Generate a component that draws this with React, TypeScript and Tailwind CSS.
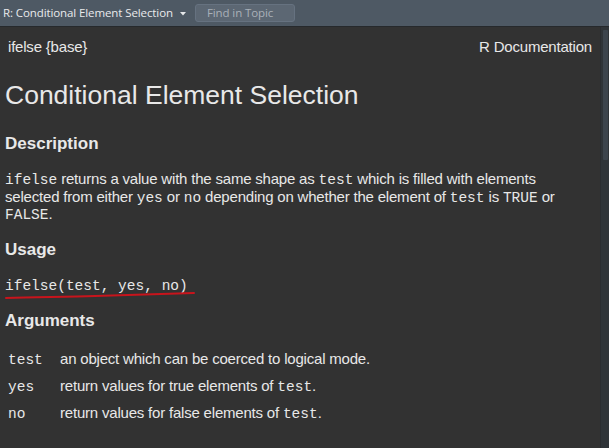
import React from "react";

const mono = "[font-family:'Liberation_Mono','Courier_New',monospace] text-[14.5px] tracking-normal leading-none";

export default function App() {
  return (
    <div className="w-[609px] h-[448px] overflow-hidden flex flex-col bg-[#323232] [font-family:'Liberation_Sans',Arial,sans-serif] text-[#e8e8e8]">
      <div className="h-[27px] shrink-0 flex items-center bg-[#4e5964] border-b border-[#26292c] [font-family:'Open_Sans','Noto_Sans',sans-serif] text-[11.5px] tracking-[-0.1px]">
        <span className="ml-[3px] text-[#e9eaec]">R: Conditional Element Selection</span>
        <svg width="6" height="4" viewBox="0 0 6 4" className="ml-[7px] mt-[1px]">
          <path d="M0 0 L6 0 L3 3.5 Z" fill="#e6e8ea" />
        </svg>
        <div className="ml-[9px] w-[100px] h-[18px] rounded-[3px] bg-[#5c6773] border border-[#667280] flex items-center pl-[11px] text-[#a9b0b8]">
          Find in Topic
        </div>
      </div>
      <div className="flex flex-1 min-h-0">
        <div className="flex-1 pl-[5px] pr-[8px] tracking-[-0.2px]">
          <div className="flex justify-between items-center h-[20px] mt-[10px] text-[15px]">
            <span className="ml-[3px]">ifelse {"{base}"}</span>
            <span>R Documentation</span>
          </div>
          <h1 className="text-[26.5px] leading-[30px] mt-[23px] tracking-normal">Conditional Element Selection</h1>
          <h2 className="text-[17px] font-bold leading-[20px] mt-[24px] tracking-normal">Description</h2>
          <p className="text-[15px] leading-[17px] mt-[16px]">
            <span className={mono}>ifelse</span> returns a value with the same shape as <span className={mono}>test</span> which is filled with elements selected from either <span className={mono}>yes</span> or <span className={mono}>no</span> depending on whether the element of <span className={mono}>test</span> is <span className={mono}>TRUE</span> or <span className={mono}>FALSE</span>.
          </p>
          <h2 className="text-[17px] font-bold leading-[20px] mt-[17px] tracking-normal">Usage</h2>
          <div className="relative mt-[17px] h-[20px] flex items-center">
            <span className={mono}>ifelse(test, yes, no)</span>
            <svg className="absolute left-0 top-[12px]" width="195" height="14" viewBox="0 0 195 14">
              <path d="M1 9 C 30 8, 60 8, 90 7 C 120 6, 150 5, 189 4" stroke="#c8141c" strokeWidth="2" fill="none" strokeLinecap="round" />
            </svg>
          </div>
          <h2 className="text-[17px] font-bold leading-[20px] mt-[14px] tracking-normal">Arguments</h2>
          <div className="mt-[15px] flex flex-col text-[15px]">
            {[
              [<span className={mono}>test</span>, <>an object which can be coerced to logical mode.</>],
              [<span className={mono}>yes</span>, <>return values for true elements of <span className={mono}>test</span>.</>],
              [<span className={mono}>no</span>, <>return values for false elements of <span className={mono}>test</span>.</>],
            ].map(([a, b], i) => (
              <div key={i} className="flex items-center h-[27px]">
                <div className="w-[55px] pl-[3px]">{a}</div>
                <div>{b}</div>
              </div>
            ))}
          </div>
        </div>
        <div className="w-[9px] shrink-0 bg-[#2f3438] border-l border-[#2a2d30] pt-[3px] pl-[2px]">
          <div className="w-[5px] h-[130px] bg-[#3c444c] rounded-[1px]" />
        </div>
      </div>
    </div>
  );
}
